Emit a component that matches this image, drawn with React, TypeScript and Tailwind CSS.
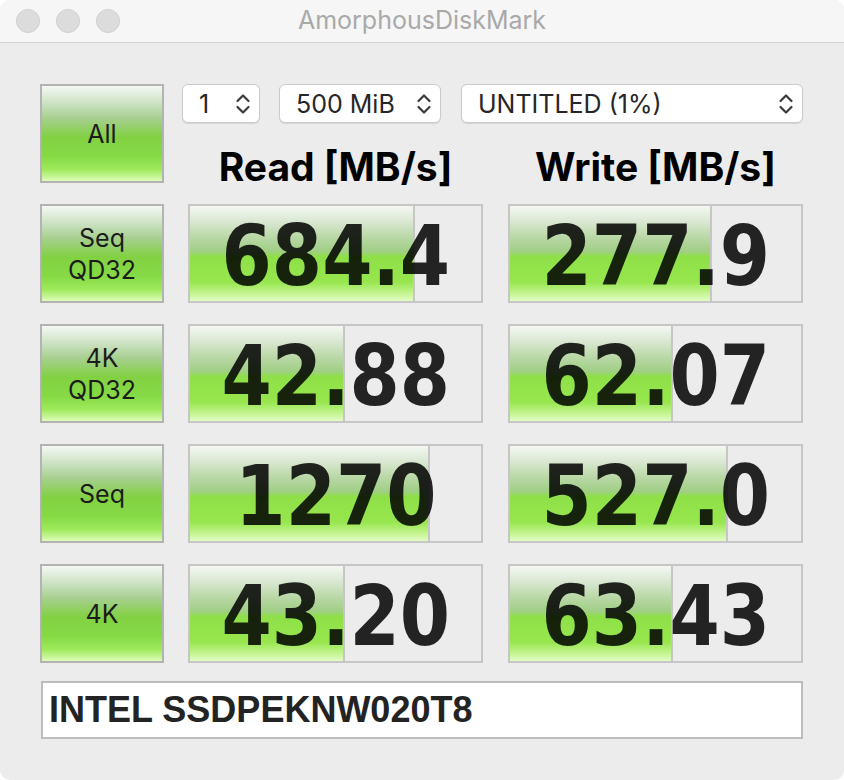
import React from "react";

const btnGrad =
  "bg-[linear-gradient(to_bottom,#f4f8f2_0%,#d2e5ca_16%,#a6cf8f_34%,#82d143_54%,#86da45_74%,#9fea5c_88%,#ddfbb9_100%)]";
const fillGrad =
  "bg-[linear-gradient(to_bottom,#f4f7f2_0%,#dce9d5_15%,#b5d6a1_35%,#a0cf84_48%,#8fe048_53%,#97e64e_80%,#c5f591_92%,#e2fcc4_100%)]";

function Chevrons() {
  return (
    <svg width="16" height="24" viewBox="0 0 16 24" fill="none">
      <path d="M2.5 9 L8 3.5 L13.5 9" stroke="#3a3a3a" strokeWidth="2.2" strokeLinecap="round" strokeLinejoin="round" />
      <path d="M2.5 15 L8 20.5 L13.5 15" stroke="#3a3a3a" strokeWidth="2.2" strokeLinecap="round" strokeLinejoin="round" />
    </svg>
  );
}

function Popup({ label, width }: { label: string; width: string }) {
  return (
    <div
      className={`${width} h-[39px] rounded-[6px] bg-white border border-[#cbcbcb] shadow-[0_1px_1px_rgba(0,0,0,0.10)] flex items-center justify-between pl-[16px] pr-[8px] font-['Inter',sans-serif] text-[25px] text-[#262626]`}
    >
      <span className="pt-[3px]">{label}</span>
      <Chevrons />
    </div>
  );
}

function TestButton({ lines }: { lines: string[] }) {
  return (
    <div
      className={`w-[124px] h-[99px] shrink-0 border-2 border-[#b3b3b3] ${btnGrad} flex flex-col items-center justify-center font-['Inter',sans-serif] text-[25px] leading-[32px] text-[#1c1c1c]`}
    >
      {lines.map((l) => (
        <span key={l}>{l}</span>
      ))}
    </div>
  );
}

function Result({ value, fill }: { value: string; fill: number }) {
  return (
    <div className="relative w-[295px] h-[99px] border-2 border-[#c6c6c6] bg-[#ececec] overflow-hidden">
      <div
        className={`absolute left-0 top-0 bottom-0 border-r-2 border-[#c6c6c6] ${fillGrad}`}
        style={{ width: fill }}
      />
      <div className="relative h-full flex items-center justify-center">
        <span className="inline-block font-['DejaVu_Sans',sans-serif] font-bold text-[84px] leading-none text-black/85 scale-x-[0.86] mt-[4px]">
          {value}
        </span>
      </div>
    </div>
  );
}

const rows = [
  { label: ["Seq", "QD32"], read: "684.4", rf: 225, write: "277.9", wf: 202 },
  { label: ["4K", "QD32"], read: "42.88", rf: 155, write: "62.07", wf: 163 },
  { label: ["Seq"], read: "1270", rf: 240, write: "527.0", wf: 218 },
  { label: ["4K"], read: "43.20", rf: 155, write: "63.43", wf: 163 },
];

export default function App() {
  return (
    <div className="w-[844px] h-[780px] bg-white">
      <div className="w-[844px] h-[780px] bg-[#ececec] rounded-[10px] overflow-hidden flex flex-col">
        <div className="relative h-[43px] shrink-0 bg-[#f6f6f6] border-b border-[#d3d3d3] flex items-center">
          <div className="flex gap-[16px] pl-[16px]">
            <div className="w-[24px] h-[24px] rounded-full bg-[#dcdcdc] border border-[#cfcfcf]" />
            <div className="w-[24px] h-[24px] rounded-full bg-[#dcdcdc] border border-[#cfcfcf]" />
            <div className="w-[24px] h-[24px] rounded-full bg-[#dcdcdc] border border-[#cfcfcf]" />
          </div>
          <div className="absolute inset-0 flex items-center justify-center font-['Inter',sans-serif] text-[25px] text-[#a9a9a9]">
            AmorphousDiskMark
          </div>
        </div>

        <div className="pl-[40px] pt-[41px] flex flex-col">
          <div className="flex">
            <TestButton lines={["All"]} />
            <div className="flex flex-col">
              <div className="flex gap-[19px] pl-[18px]">
                <Popup label="1" width="w-[78px]" />
                <Popup label="500 MiB" width="w-[162px]" />
                <Popup label="UNTITLED (1%)" width="w-[342px] ml-[1px]" />
              </div>
              <div className="flex pl-[24px] gap-[25px] h-[60px] items-center font-['Inter',sans-serif] font-bold text-[39px] leading-none text-black">
                <div className="w-[295px] text-center pt-[26px]">Read [MB/s]</div>
                <div className="w-[295px] text-center pt-[26px]">Write [MB/s]</div>
              </div>
            </div>
          </div>

          <div className="flex flex-col gap-[21px] mt-[21px]">
            {rows.map((r) => (
              <div key={r.read} className="flex">
                <TestButton lines={r.label} />
                <div className="ml-[24px]">
                  <Result value={r.read} fill={r.rf} />
                </div>
                <div className="ml-[25px]">
                  <Result value={r.write} fill={r.wf} />
                </div>
              </div>
            ))}
          </div>

          <div className="mt-[18px] ml-[1px] w-[762px] h-[58px] bg-white border-2 border-[#bdbdbd] flex items-center pl-[6px] font-['Liberation_Sans',sans-serif] font-bold text-[36px] text-[#232323]">
            INTEL SSDPEKNW020T8
          </div>
        </div>
      </div>
    </div>
  );
}
